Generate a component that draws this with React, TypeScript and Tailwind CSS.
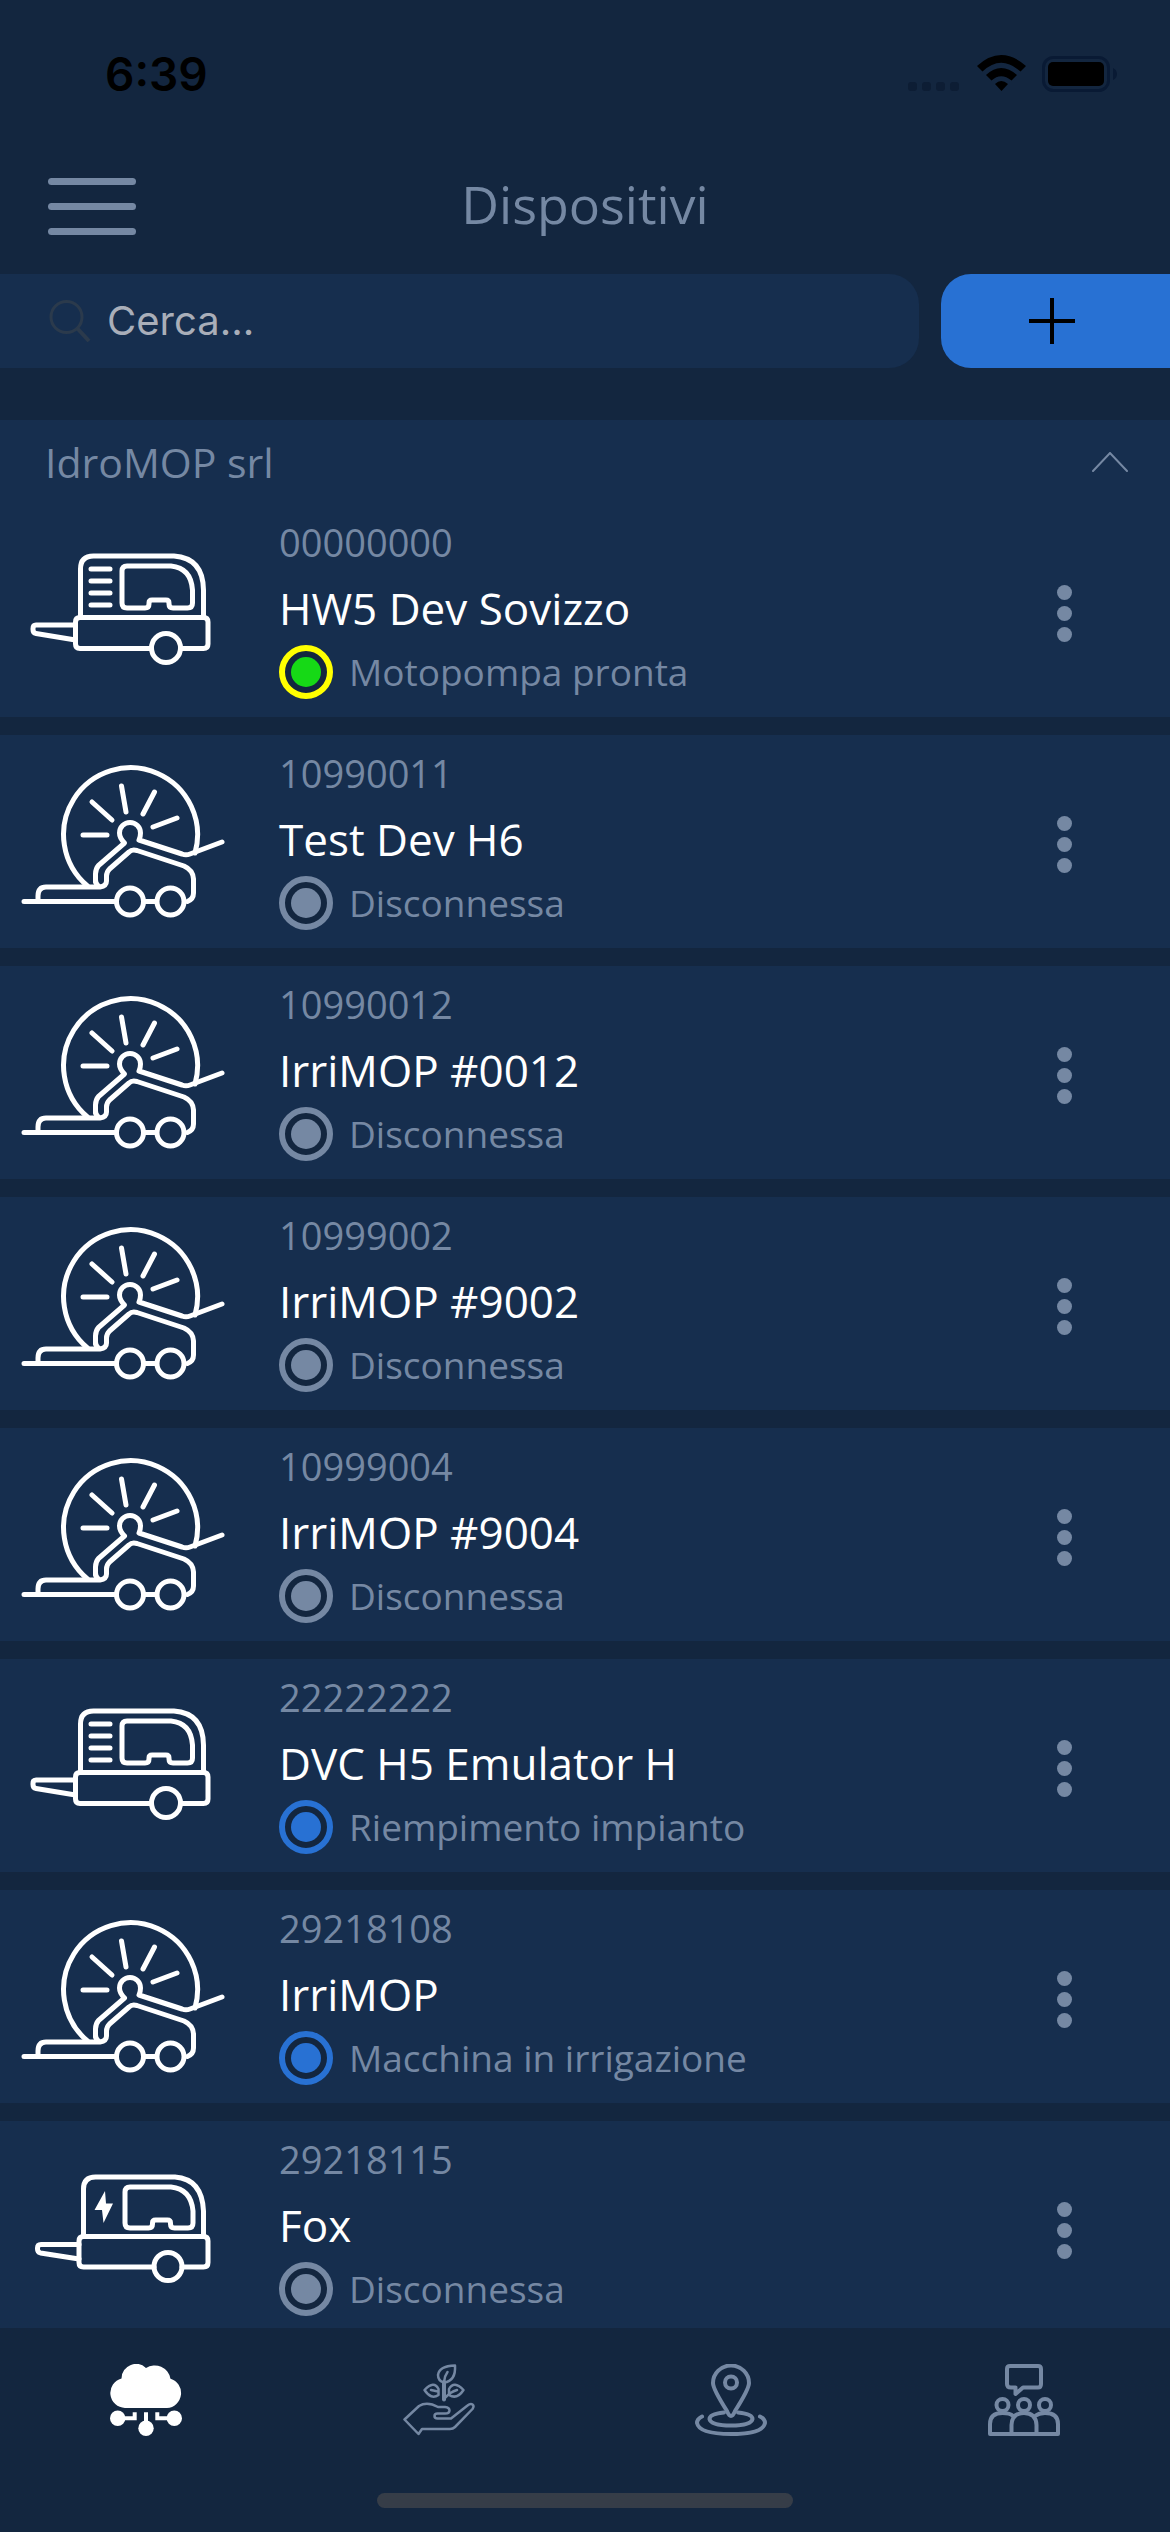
import React, { useState } from 'react';

type DeviceKind = 'pump' | 'reel' | 'electric';
type DeviceStatus = 'ready' | 'offline' | 'running';

interface Device {
  id: string;
  name: string;
  kind: DeviceKind;
  status: DeviceStatus;
  statusText: string;
}

const devices: Device[] = [
  { id: '00000000', name: 'HW5 Dev Sovizzo', kind: 'pump', status: 'ready', statusText: 'Motopompa pronta' },
  { id: '10990011', name: 'Test Dev H6', kind: 'reel', status: 'offline', statusText: 'Disconnessa' },
  { id: '10990012', name: 'IrriMOP #0012', kind: 'reel', status: 'offline', statusText: 'Disconnessa' },
  { id: '10999002', name: 'IrriMOP #9002', kind: 'reel', status: 'offline', statusText: 'Disconnessa' },
  { id: '10999004', name: 'IrriMOP #9004', kind: 'reel', status: 'offline', statusText: 'Disconnessa' },
  { id: '22222222', name: 'DVC H5 Emulator H', kind: 'pump', status: 'running', statusText: 'Riempimento impianto' },
  { id: '29218108', name: 'IrriMOP', kind: 'reel', status: 'running', statusText: 'Macchina in irrigazione' },
  { id: '29218115', name: 'Fox', kind: 'electric', status: 'offline', statusText: 'Disconnessa' },
];

const statusColors: Record<DeviceStatus, { ring: string; dot: string }> = {
  ready: { ring: 'border-[#ffff00]', dot: 'bg-[#16d916]' },
  offline: { ring: 'border-[#7588a3]', dot: 'bg-[#7588a3]' },
  running: { ring: 'border-[#2871d3]', dot: 'bg-[#2871d3]' },
};

const deviceIconProps = {
  viewBox: '0 0 216 160',
  className: 'w-[216px] h-[160px]',
  fill: 'none',
  stroke: 'currentColor',
  strokeWidth: 5,
  strokeLinecap: 'round' as const,
  strokeLinejoin: 'round' as const,
  'aria-hidden': true,
};

const PumpIcon: React.FC = () => (
  <svg {...deviceIconProps}>
    <path d="M64.500 89V41q0-13 13-13H158q29 2 29.500 34V89" />
    <path d="M135.500 120.500H64q-4.500 0-4.500-4.500V94q0-4.500 4.500-4.500H187.500q4.500 0 4.500 4.500v22q0 4.500-4.500 4.500H164.500" />
    <circle cx="150" cy="120" r="14.500" />
    <path d="M59.500 97H20q-3 0-3 3.500v1q0 3.500 3 4L59.500 112" />
    <path d="M111 38H155q20 2 21.500 24V75q0 5-5 5h-14.500q-4 0-4-4v-1q0-3-3-3h-14q-3 0-3 3v1q0 4-4 4H111q-5 0-5-5V43q0-5 5-5z" />
    <path d="M75 41H94M75 53H94M75 65H94M75 77H94" />
  </svg>
);

const ElectricPumpIcon: React.FC = () => (
  <svg {...deviceIconProps}>
    <path d="M67.500 91V44q0-12 12-12H159q27 2 28.500 34V91" />
    <path d="M138 122H67.500q-4.500 0-4.500-4.500V96q0-4.500 4.500-4.500H187.500q4.500 0 4.500 4.500v21.500q0 4.500-4.500 4.500H166" />
    <circle cx="152" cy="121.500" r="14" />
    <path d="M63 99.500H25q-3.500 0-3.500 3.500v1q0 3 3 4L63 114" />
    <path d="M114 42H155q20 2 22 24V78q0 5-5 5h-13.500q-4 0-4-4v-1q0-3-3-3h-12q-3 0-3 3v1q0 4-4 4H114q-5 0-5-5V47q0-5 5-5z" />
    <path d="M89 46L78.500 65H86L87.500 78L97 58.500H90z" fill="currentColor" stroke="none" />
  </svg>
);

const ReelIcon: React.FC = () => (
  <svg {...deviceIconProps}>
    <path d="M71.500 127A67 67 0 1 1 179 94" />
    <path d="M67 76H91M76 43L96 61M105.500 27L110 53M138.500 33L127 55M161 59L137 68" />
    <path d="M79.500 122.500V115q0-5 3-8.500L108.500 84q-5-5-5-10a10.500 10.500 0 0 1 21 0q0 4-1.500 7L166 95q4 1.500 8 0L206 83" />
    <path d="M22 140v-3q0-9 8-9H84q6.500-1 6.500-6v-5q0-4 3-7L113 93q3-3 8-1.500L168 107q9 4 9.500 13v14q0 6-6 8.500" />
    <path d="M79.500 121q0 4 3 6" />
    <path d="M8 142.500H100M129 142.500H139.500" />
    <circle cx="114" cy="142.500" r="13.500" />
    <circle cx="154.500" cy="142.500" r="13.500" />
  </svg>
);

const DeviceIcon: React.FC<{ kind: DeviceKind }> = ({ kind }) => {
  if (kind === 'pump') return <PumpIcon />;
  if (kind === 'electric') return <ElectricPumpIcon />;
  return <ReelIcon />;
};

const CloudIcon: React.FC = () => (
  <svg viewBox="0 0 72 72" className="w-[72px] h-[72px]" fill="currentColor" aria-hidden>
    <path d="M15 44A15 15 0 0 1 11.500 14.500A14.500 14.500 0 0 1 36 4A16 16 0 0 1 60.500 14.700A15 15 0 0 1 57 44z" />
    <circle cx="7.700" cy="54.300" r="7.700" />
    <circle cx="64.300" cy="54.300" r="7.700" />
    <circle cx="36" cy="64.300" r="7.700" />
    <path d="M8 54.300H24.700V48.300M64 54.300H47.300V48.300M36 48.300V60" fill="none" stroke="currentColor" strokeWidth="4" />
  </svg>
);

const HandPlantIcon: React.FC = () => (
  <svg viewBox="0 0 72 72" className="w-[72px] h-[72px]" fill="none" stroke="currentColor" strokeWidth="2.500" strokeLinejoin="round" strokeLinecap="round" aria-hidden>
    <path d="M1.500 55.500L15.500 70L19 65H47q3 0 5-2L69.500 45q2-3 0-4.500t-5 1L48 54.500H34.500q-3 0-3-2.500t3-2.500H42q4.500 0 4.500-3t-4.500-3.500H35Q24 37 16 42z" />
    <path d="M52 1.500Q36 2 35 11q0 6 6 7.500Q53 17 52 1.500zM44.500 8Q41.500 12 41 18" />
    <path d="M41 18V35.500" strokeWidth="4" />
    <path d="M21.500 26Q31 16 35.500 25v6Q28 36 21.500 26zM28 26l7 1.500" />
    <path d="M60.500 26Q51 16 46 25v6Q54 36 60.500 26zM54 26Q47 28 42 34" />
  </svg>
);

const PinIcon: React.FC = () => (
  <svg viewBox="0 0 72 72" className="w-[72px] h-[72px]" fill="none" stroke="currentColor" strokeWidth="4" strokeLinecap="round" strokeLinejoin="round" aria-hidden>
    <path d="M36 52Q34 52 32 47Q18 25 18 19A18 17.500 0 0 1 54 19Q54 25 40 47Q38 52 36 52z" />
    <circle cx="36" cy="18.500" r="6" />
    <path d="M29 48.500Q14.500 50 14.500 55Q16 61.500 36 61.500T57.500 55Q57.500 50 43 48.500" />
    <path d="M7 52.500Q2 55 2 59Q4 70 36 70T70 59Q70 55 65 52.500" />
  </svg>
);

const CommunityIcon: React.FC = () => (
  <svg viewBox="0 0 72 72" className="w-[72px] h-[72px]" fill="none" stroke="currentColor" strokeWidth="4" strokeLinejoin="round" strokeLinecap="round" aria-hidden>
    <path d="M22 2H50q3 0 3 3V20q0 3.500-3 3.500H35L27.500 30V23.500H23q-4 0-4-3.500V5q0-3 3-3z" />
    <circle cx="14.500" cy="41" r="6" />
    <circle cx="36" cy="41" r="6" />
    <circle cx="57" cy="41" r="6" />
    <path d="M2 70V60Q2 49 14.500 49Q22 49 25 52M70 70V60Q70 49 57 49Q51 49 47 52M23.500 69V61Q24 49 36 49Q48 49 48.500 61V69M2 70H70" />
  </svg>
);

const StatusBar: React.FC = () => (
  <div className="flex h-[148px] shrink-0 items-center justify-between pl-[105px] pr-[52px] text-black">
    <span className="font-['Inter',sans-serif] text-[46px] font-semibold">6:39</span>
    <svg viewBox="0 0 212 40" className="h-10 w-[212px]" aria-hidden>
      <g fill="#0d1d34">
        <rect x="2" y="28" width="9" height="9" rx="3" />
        <rect x="16" y="28" width="9" height="9" rx="3" />
        <rect x="30" y="28" width="9" height="9" rx="3" />
        <rect x="44" y="28" width="9" height="9" rx="3" />
      </g>
      <path d="M71 12Q95-10 120 12L114.500 17.500Q95 0 76.500 17.500zM80 21Q95 7 111 21L105.500 26.500Q95 18 85.500 26.500zM89 30Q95 24 102 30L95.500 37z" />
      <rect x="137.500" y="3.500" width="65" height="33" rx="10" fill="none" stroke="#091a34" strokeWidth="3" />
      <rect x="142" y="8" width="56" height="24" rx="5" />
      <path d="M207 14q4 2 4 6t-4 6z" fill="#091a34" />
    </svg>
  </div>
);

const DeviceRow: React.FC<{ device: Device }> = ({ device }) => {
  const colors = statusColors[device.status];

  return (
    <li className="flex shrink-0 items-start bg-[#162e4e] pt-2 pb-[17px]">
      <div className="w-[279px] shrink-0 pt-4 pl-4 text-white">
        <DeviceIcon kind={device.kind} />
      </div>
      <div className="min-w-0 flex-1">
        <p className="text-[38px] leading-[60px] text-[#7588a3]">{device.id}</p>
        <h2 className="text-[44px] leading-[72px] text-white">{device.name}</h2>
        <div className="flex h-14 items-center gap-4">
          <span className={`flex size-[54px] shrink-0 items-center justify-center rounded-full border-[6px] bg-[#13263f] ${colors.ring}`}>
            <span className={`size-[30px] rounded-full ${colors.dot}`} />
          </span>
          <span className="text-[37px] leading-[56px] text-[#7588a3]">{device.statusText}</span>
        </div>
      </div>
      <button type="button" aria-label={`Opzioni ${device.name}`} className="mr-20 flex w-[52px] flex-col items-center gap-[6px] pt-[73px]">
        <span className="size-[15px] rounded-full bg-[#7588a3]" />
        <span className="size-[15px] rounded-full bg-[#7588a3]" />
        <span className="size-[15px] rounded-full bg-[#7588a3]" />
      </button>
    </li>
  );
};

const tabs = [
  { key: 'devices', label: 'Dispositivi', icon: <CloudIcon /> },
  { key: 'fields', label: 'Campi', icon: <HandPlantIcon /> },
  { key: 'map', label: 'Mappa', icon: <PinIcon /> },
  { key: 'community', label: 'Utenti', icon: <CommunityIcon /> },
];

const App: React.FC = () => {
  const [query, setQuery] = useState('');
  const [isOpen, setIsOpen] = useState(true);
  const [activeTab, setActiveTab] = useState('devices');

  const filtered = devices.filter((device) =>
    `${device.id} ${device.name}`.toLowerCase().includes(query.trim().toLowerCase())
  );

  return (
    <div className="flex h-screen flex-col overflow-hidden bg-[#13263f] font-['Open_Sans','Noto_Sans',sans-serif]">
      <StatusBar />

      <header className="grid h-[116px] shrink-0 grid-cols-[1fr_auto_1fr] items-center px-12">
        <button type="button" aria-label="Menu" className="flex w-[88px] flex-col gap-[18px]">
          <span className="h-[7px] rounded-full bg-[#7588a3]" />
          <span className="h-[7px] rounded-full bg-[#7588a3]" />
          <span className="h-[7px] rounded-full bg-[#7588a3]" />
        </button>
        <h1 className="pb-1 text-[52px] leading-[72px] text-[#7588a3]">Dispositivi</h1>
      </header>

      <div className="mt-[10px] flex h-[94px] shrink-0 gap-[22px]">
        <label className="flex flex-1 items-center gap-4 rounded-r-[30px] bg-[#162e4e] pl-[49px]">
          <svg viewBox="0 0 42 42" className="size-[42px] shrink-0 text-[#2b3a4c]" fill="none" stroke="currentColor" strokeWidth="3" aria-hidden>
            <circle cx="17.500" cy="17" r="15.500" />
            <path d="M28 28L40 41" strokeWidth="4" />
          </svg>
          <input
            type="text"
            aria-label="Cerca"
            placeholder="Cerca..."
            value={query}
            onChange={(e) => setQuery(e.target.value)}
            className="min-w-0 flex-1 bg-transparent font-['Inter',sans-serif] text-[40px] text-white outline-none placeholder:text-[#a9aeb9]"
          />
        </label>
        <button type="button" aria-label="Aggiungi dispositivo" className="flex w-[229px] items-center justify-center rounded-l-[30px] bg-[#2871d3] pr-2">
          <svg viewBox="0 0 46 46" className="size-[46px]" stroke="black" strokeWidth="4" aria-hidden>
            <path d="M23 0V46M0 23H46" />
          </svg>
        </button>
      </div>

      <main className="mt-[52px] min-h-0 flex-1 overflow-hidden">
        <button
          type="button"
          aria-expanded={isOpen}
          onClick={() => setIsOpen(!isOpen)}
          className="flex h-[84px] w-full items-center justify-between bg-[#162e4e] pr-[42px] pl-[45px] text-[#7588a3]"
        >
          <span className="text-[41px] leading-[56px]">IdroMOP srl</span>
          <svg viewBox="0 0 36 20" className="h-5 w-9" fill="none" stroke="currentColor" strokeWidth="2" strokeLinecap="round" aria-hidden>
            <path d="M1 19L18 1L35 19" />
          </svg>
        </button>
        {isOpen && (
          <ul className="flex flex-col gap-[18px]">
            {filtered.map((device) => (
              <DeviceRow key={device.id} device={device} />
            ))}
          </ul>
        )}
      </main>

      <nav className="shrink-0 bg-[#13263f]">
        <div className="grid grid-cols-4 pt-9">
          {tabs.map((tab) => (
            <button
              key={tab.key}
              type="button"
              aria-label={tab.label}
              onClick={() => setActiveTab(tab.key)}
              className={`flex justify-center ${activeTab === tab.key ? 'text-white' : 'text-[#7588a3]'}`}
            >
              {tab.icon}
            </button>
          ))}
        </div>
        <div className="mx-auto mt-[57px] mb-6 h-[15px] w-[416px] rounded-full bg-[#363d48]" />
      </nav>
    </div>
  );
};

export default App;
